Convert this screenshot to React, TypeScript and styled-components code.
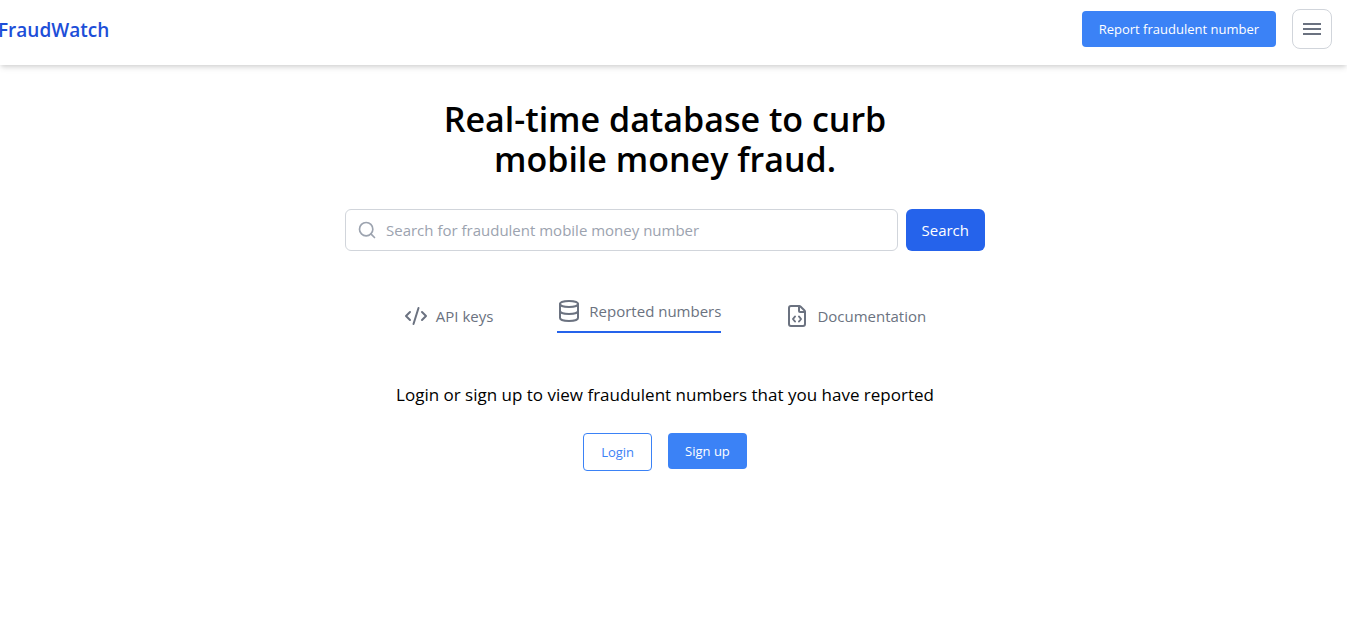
import React from "react";
import styled, { createGlobalStyle, css } from "styled-components";
import { CodeXml, Database, FileCode, Search } from "lucide-react";

const GlobalStyle = createGlobalStyle`
  *, *::before, *::after { box-sizing: border-box; }
  body {
    margin: 0;
    background: #fff;
    color: #000;
    font-family: "Segoe UI", "Open Sans", "Noto Sans", sans-serif;
    font-size: 15px;
    line-height: 24px;
    overflow-x: hidden;
  }
  h1, p { margin: 0; }
  button, input { font: inherit; }
  button { cursor: pointer; }
`;

const Header = styled.header`
  display: flex;
  align-items: center;
  justify-content: space-between;
  padding: 9px 15px 16px 0;
  box-shadow: 0 4px 6px -1px rgba(0, 0, 0, 0.1), 0 2px 4px -1px rgba(0, 0, 0, 0.1);
`;

const Brand = styled.a`
  margin-left: -2px;
  padding-top: 2px;
  color: #1d4ed8;
  font-size: 19px;
  font-weight: 600;
  line-height: 28px;
  text-decoration: none;
`;

const Actions = styled.div<{ $align?: string }>`
  display: flex;
  align-items: ${(p) => p.$align ?? "center"};
  gap: 16px;
`;

const Button = styled.button<{ $outline?: boolean }>`
  padding: 8px 17px;
  border: 0;
  border-radius: 4px;
  background: #3b82f6;
  color: #fff;
  font-size: 13px;
  line-height: 20px;
  font-weight: 500;
  ${(p) =>
    p.$outline &&
    css`
      border: 1px solid #3b82f6;
      background: #fff;
      color: #3b82f6;
      font-weight: 400;
    `}
`;

const MenuButton = styled.button`
  display: grid;
  place-items: center;
  width: 40px;
  height: 40px;
  padding: 0;
  border: 1px solid #d1d5db;
  border-radius: 8px;
  background: #fff;
  color: #6b7280;
`;

const Main = styled.main`
  display: flex;
  flex-direction: column;
  align-items: center;
  padding: 34px 17px 48px 0;
`;

const Title = styled.h1`
  max-width: 480px;
  font-size: 34px;
  font-weight: 600;
  line-height: 40px;
  text-align: center;
`;

const SearchForm = styled.form`
  display: flex;
  gap: 8px;
  width: 100%;
  max-width: 640px;
  margin-top: 30px;
`;

const Field = styled.label`
  display: flex;
  flex: 1;
  align-items: center;
  gap: 9px;
  padding: 0 11px;
  border: 1px solid #d1d5db;
  border-radius: 6px;
  color: #9ca3af;
`;

const SearchInput = styled.input`
  flex: 1;
  min-width: 0;
  height: 40px;
  padding: 0;
  border: 0;
  outline: 0;
  background: transparent;
  color: #111827;
  &::placeholder { color: #9ca3af; opacity: 1; }
`;

const SearchButton = styled.button`
  padding: 8px 16px;
  border: 0;
  border-radius: 6px;
  background: #2563eb;
  color: #fff;
`;

const Tabs = styled.nav`
  display: flex;
  align-items: center;
  gap: 64px;
  margin-top: 48px;
`;

const Tab = styled.a<{ $active?: boolean }>`
  display: flex;
  align-items: center;
  gap: 8px;
  color: #6b7280;
  text-decoration: none;
  ${(p) =>
    p.$active &&
    css`
      padding-bottom: 8px;
      border-bottom: 2px solid #2563eb;
    `}
`;

const Prompt = styled.section`
  display: flex;
  flex-direction: column;
  align-items: center;
  gap: 24px;
  margin-top: 48px;
  font-size: 17px;
  line-height: 28px;
`;

const MenuIcon = () => (
  <svg width="24" height="24" viewBox="0 0 24 24" fill="currentColor" aria-hidden>
    <path d="M3 6h18v2H3zM3 11h18v2H3zM3 16h18v2H3z" />
  </svg>
);

export default function App() {
  return (
    <>
      <GlobalStyle />
      <Header>
        <Brand href="#">FraudWatch</Brand>
        <Actions>
          <Button type="button">Report fraudulent number</Button>
          <MenuButton type="button" aria-label="Open menu">
            <MenuIcon />
          </MenuButton>
        </Actions>
      </Header>
      <Main>
        <Title>Real-time database to curb mobile money fraud.</Title>
        <SearchForm onSubmit={(e) => e.preventDefault()}>
          <Field>
            <Search size={20} aria-hidden />
            <SearchInput
              type="text"
              aria-label="Search for fraudulent mobile money number"
              placeholder="Search for fraudulent mobile money number"
            />
          </Field>
          <SearchButton type="submit">Search</SearchButton>
        </SearchForm>
        <Tabs>
          <Tab href="#api-keys">
            <CodeXml size={24} />
            API keys
          </Tab>
          <Tab href="#reported" $active aria-current="page">
            <Database size={24} />
            Reported numbers
          </Tab>
          <Tab href="#docs">
            <FileCode size={24} />
            Documentation
          </Tab>
        </Tabs>
        <Prompt>
          <p>Login or sign up to view fraudulent numbers that you have reported</p>
          <Actions $align="flex-start">
            <Button type="button" $outline>
              Login
            </Button>
            <Button type="button">Sign up</Button>
          </Actions>
        </Prompt>
      </Main>
    </>
  );
}
